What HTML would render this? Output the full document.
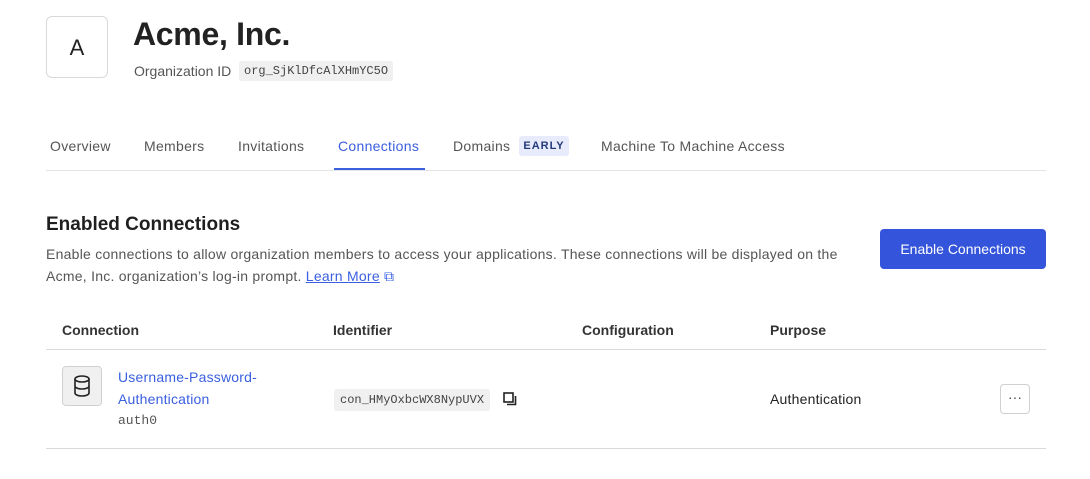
<!DOCTYPE html>
<html><head><style>
body{margin:0;width:1090px;height:479px;background:#fff;font-family:"Liberation Sans",sans-serif;color:#1f1f1f;position:relative;overflow:hidden}
.a{position:absolute}
.mono{font-family:"Liberation Mono",monospace}
.tab{position:absolute;top:138px;font-size:14px;color:#555;letter-spacing:0.3px}
.th{position:absolute;top:322px;font-size:14px;font-weight:bold;color:#333}
</style></head><body>
<div class="a" style="left:46px;top:16px;width:62px;height:62px;border:1px solid #d9d9d9;border-radius:6px;box-sizing:border-box;font-size:22px;text-align:center;line-height:62px;color:#222">A</div>
<div class="a" style="left:133px;top:16px;font-size:32px;font-weight:bold;letter-spacing:-0.3px;color:#222">Acme, Inc.</div>
<div class="a" style="left:134px;top:63px;font-size:14px;color:#555">Organization ID</div>
<div class="a mono" style="left:239px;top:61px;height:20px;padding:0 5px;background:#f0f0f0;border-radius:3px;font-size:12px;line-height:20px;color:#444">org_SjKlDfcAlXHmYC5O</div>
<div class="tab" style="left:50px">Overview</div>
<div class="tab" style="left:144px">Members</div>
<div class="tab" style="left:238px">Invitations</div>
<div class="tab" style="left:338px;color:#3a5fe0">Connections</div>
<div class="a" style="left:334px;top:168px;width:91px;height:2px;background:#3a5fe0"></div>
<div class="tab" style="left:453px">Domains</div>
<div class="a" style="left:519px;top:136px;width:50px;height:20px;background:#e8ebfb;border-radius:3px;font-size:11px;font-weight:bold;color:#243a7a;text-align:center;line-height:20px;letter-spacing:1px">EARLY</div>
<div class="tab" style="left:601px">Machine To Machine Access</div>
<div class="a" style="left:46px;top:170px;width:1000px;height:1px;background:#e3e3e3"></div>
<div class="a" style="left:46px;top:214px;font-size:19px;font-weight:bold">Enabled Connections</div>
<div class="a" style="left:46px;top:243px;width:800px;font-size:14px;line-height:22px;color:#555;letter-spacing:0.25px">Enable connections to allow organization members to access your applications. These connections will be displayed on the Acme, Inc. organization’s log-in prompt. <span style="color:#3a5fe0;text-decoration:underline">Learn More</span> <span style="color:#3a5fe0">⧉</span></div>
<div class="a" style="left:880px;top:229px;width:166px;height:40px;background:#3354db;border-radius:4px;color:#fff;font-size:14px;text-align:center;line-height:40px">Enable Connections</div>
<div class="th" style="left:62px">Connection</div>
<div class="th" style="left:333px">Identifier</div>
<div class="th" style="left:582px">Configuration</div>
<div class="th" style="left:770px">Purpose</div>
<div class="a" style="left:46px;top:349px;width:1000px;height:1px;background:#d9d9d9"></div>
<div class="a" style="left:62px;top:366px;width:40px;height:40px;background:#f0f0f0;border:1px solid #d0d0d0;border-radius:4px;box-sizing:border-box">
<svg width="38" height="38" viewBox="0 0 38 38"><g fill="none" stroke="#222" stroke-width="1.6"><ellipse cx="19" cy="12" rx="7" ry="3"/><path d="M12 12v14c0 1.7 3 3 7 3s7-1.3 7-3V12M12 19c0 1.7 3 3 7 3s7-1.3 7-3"/></g></svg></div>
<div class="a" style="left:118px;top:366px;font-size:14px;line-height:22px;color:#3a5fe0;letter-spacing:0.2px">Username-Password-<br>Authentication</div>
<div class="a mono" style="left:118px;top:413px;font-size:13px;color:#555">auth0</div>
<div class="a mono" style="left:334px;top:389px;height:22px;padding:0 6px;background:#f0f0f0;border-radius:3px;font-size:12px;line-height:22px;color:#444">con_HMyOxbcWX8NypUVX</div>
<svg class="a" style="left:502px;top:391px" width="16" height="16" viewBox="0 0 16 16"><rect x="2" y="2" width="9" height="9" fill="none" stroke="#222" stroke-width="1.6"/><path d="M5 13.5h8.5V5" fill="none" stroke="#222" stroke-width="1.6"/></svg>
<div class="a" style="left:770px;top:391px;font-size:14px;color:#222;letter-spacing:0.2px">Authentication</div>
<div class="a" style="left:1000px;top:384px;width:30px;height:30px;border:1px solid #d0d0d0;border-radius:4px;box-sizing:border-box;text-align:center;line-height:24px;font-size:14px;color:#444">···</div>
<div class="a" style="left:46px;top:448px;width:1000px;height:1px;background:#d9d9d9"></div>
</body></html>
